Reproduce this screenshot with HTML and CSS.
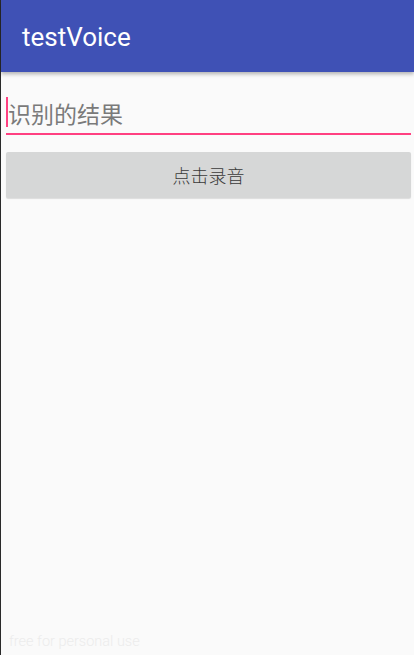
FILE: index.html
```html
<!DOCTYPE html>
<html lang="zh">
<head>
<meta charset="utf-8">
<title>testVoice</title>
<link rel="stylesheet" href="styles.css">
</head>
<body>
<div class="screen">
  <header class="appbar">
    <span class="title">testVoice</span>
  </header>
  <main class="content">
    <div class="edit">
      <span class="cursor"></span>
      <span class="hint">识别的结果</span>
    </div>
    <button class="btn" type="button">点击录音</button>
  </main>
  <footer class="watermark">free for personal use</footer>
</div>
</body>
</html>
```

FILE: styles.css
```css
html, body {
  margin: 0;
  padding: 0;
  height: 100%;
}
body {
  background: #fafafa;
  font-family: Roboto, "Noto Sans CJK SC", sans-serif;
}
.screen {
  height: 655px;
  border-left: 1px solid #2a2a2a;
  box-sizing: border-box;
  display: flex;
  flex-direction: column;
  background: #fafafa;
}
.appbar {
  height: 72px;
  flex: none;
  background: #3f51b5;
  display: flex;
  align-items: center;
  padding-left: 21px;
  box-shadow: 0 2px 4px rgba(0,0,0,0.3);
  position: relative;
}
.title {
  color: #ffffff;
  font-size: 26px;
  margin-top: 1px;
}
.content {
  flex: 1;
  padding: 25px 3px 0 5px;
  display: flex;
  flex-direction: column;
}
.edit {
  height: 36px;
  border-bottom: 2px solid #ff4081;
  display: flex;
  align-items: flex-start;
}
.cursor {
  width: 2px;
  height: 30px;
  background: #ff4081;
}
.hint {
  color: #7a7a7a;
  font-size: 23px;
  font-family: "Noto Sans CJK SC", sans-serif;
  line-height: 1;
  margin-top: 5px;
}
.btn {
  margin-top: 17px;
  height: 46px;
  border: none;
  border-radius: 2px;
  background: #d6d7d7;
  color: #3a3a3a;
  font-size: 18px;
  font-family: "Noto Sans CJK SC", sans-serif;
  font-weight: 300;
  box-shadow: 0 1px 1px rgba(0,0,0,0.12);
  padding: 0;
}
.watermark {
  flex: none;
  padding: 2px 0 0 8px;
  line-height: 17px;
  color: #ececec;
  font-size: 14.5px;
  font-weight: 300;
  height: 24px;
  box-sizing: border-box;
}
```
